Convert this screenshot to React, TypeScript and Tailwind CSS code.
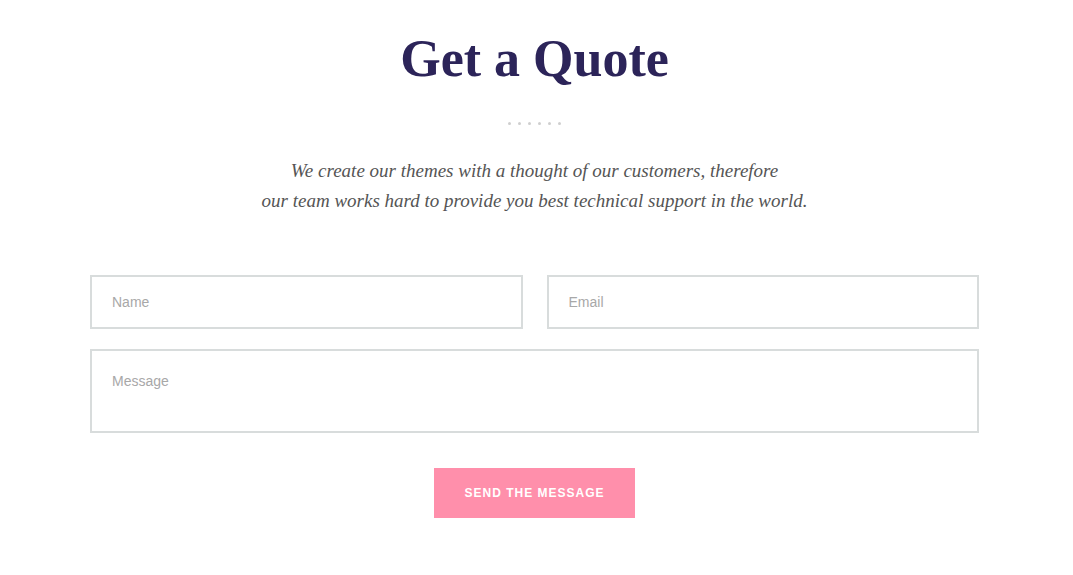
export default function App() {
  return (
    <div className="min-h-[575px] bg-white">
      <div className="ml-[90px] w-[889px] pt-[27px]">
        <h1
          className="text-center text-[52px] leading-[64px] font-bold text-[#2c2459]"
          style={{ fontFamily: '"Liberation Serif", "DejaVu Serif", serif' }}
        >
          Get a Quote
        </h1>

        {/* dotted divider */}
        <div className="mt-[31px] flex justify-center gap-[7px]">
          {[0, 1, 2, 3, 4, 5].map((i) => (
            <span key={i} className="block h-[3px] w-[3px] rounded-full bg-[#cfcfcf]" />
          ))}
        </div>

        <p
          className="mt-[31px] text-center text-[19px] leading-[30px] italic text-[#555555]"
          style={{ fontFamily: '"Liberation Serif", "DejaVu Serif", serif' }}
        >
          We create our themes with a thought of our customers, therefore
          <br />
          our team works hard to provide you best technical support in the world.
        </p>

        <form
          className="mt-[59px]"
          style={{ fontFamily: '"Liberation Sans", Arial, sans-serif' }}
          onSubmit={(e) => e.preventDefault()}
        >
          <div className="grid grid-cols-2 gap-[24px]">
            <input
              type="text"
              placeholder="Name"
              className="h-[54px] border-2 border-[#d8dcdc] px-[20px] text-[14px] text-[#333] placeholder:text-[#a8a8a8] outline-none"
            />
            <input
              type="email"
              placeholder="Email"
              className="h-[54px] border-2 border-[#d8dcdc] px-[20px] text-[14px] text-[#333] placeholder:text-[#a8a8a8] outline-none"
            />
          </div>
          <textarea
            placeholder="Message"
            className="mt-[20px] block h-[84px] w-full resize-none border-2 border-[#d8dcdc] px-[20px] pt-[20px] text-[14px] text-[#333] placeholder:text-[#a8a8a8] outline-none"
          />
          <div className="mt-[35px] flex justify-center">
            <button
              type="submit"
              className="h-[50px] w-[201px] bg-[#ff8fab] text-[12px] font-bold uppercase tracking-[1px] text-white"
            >
              Send the message
            </button>
          </div>
        </form>
      </div>
    </div>
  );
}
